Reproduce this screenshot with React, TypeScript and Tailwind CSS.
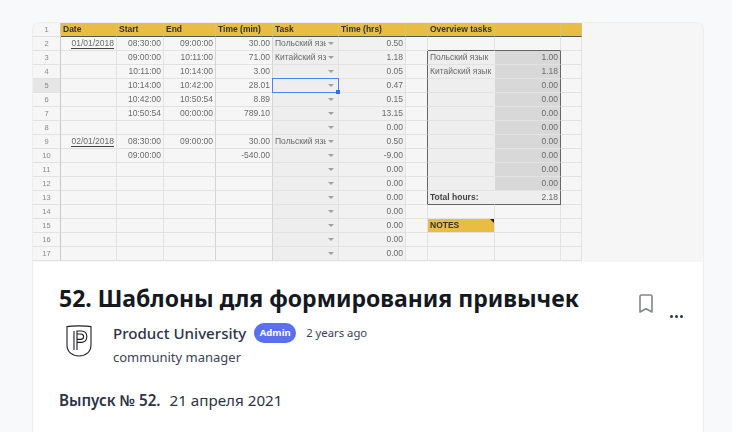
const rows: string[][] = [
  ['Date', 'Start', 'End', 'Time (min)', 'Task', 'Time (hrs)', '', 'Overview tasks', '', ''],
  ['01/01/2018', '08:30:00', '09:00:00', '30.00', 'Польский язык', '0.50', '', '', '', ''],
  ['', '09:00:00', '10:11:00', '71.00', 'Китайский язык', '1.18', '', 'Польский язык', '1.00', ''],
  ['', '10:11:00', '10:14:00', '3.00', '', '0.05', '', 'Китайский язык', '1.18', ''],
  ['', '10:14:00', '10:42:00', '28.01', '', '0.47', '', '', '0.00', ''],
  ['', '10:42:00', '10:50:54', '8.89', '', '0.15', '', '', '0.00', ''],
  ['', '10:50:54', '00:00:00', '789.10', '', '13.15', '', '', '0.00', ''],
  ['', '', '', '', '', '0.00', '', '', '0.00', ''],
  ['02/01/2018', '08:30:00', '09:00:00', '30.00', 'Польский язык', '0.50', '', '', '0.00', ''],
  ['', '09:00:00', '', '-540.00', '', '-9.00', '', '', '0.00', ''],
  ['', '', '', '', '', '0.00', '', '', '0.00', ''],
  ['', '', '', '', '', '0.00', '', '', '0.00', ''],
  ['', '', '', '', '', '0.00', '', 'Total hours:', '2.18', ''],
  ['', '', '', '', '', '0.00', '', '', '', ''],
  ['', '', '', '', '', '0.00', '', 'NOTES', '', ''],
  ['', '', '', '', '', '0.00', '', '', '', ''],
  ['', '', '', '', '', '0.00', '', '', '', ''],
]

function SheetCell({ value, row, col }: { value: string; row: number; col: number }) {
  const isHeader = row === 0
  const inBox = row >= 2 && row <= 12
  const isNotes = row === 14 && col === 7
  const isTotal = row === 12
  const isSelected = row === 4 && col === 4
  const boxCol = col === 7 || col === 8
  const rightAlign = (col <= 5 && col !== 4) || col === 8

  let bg = 'bg-[#f6f6f6]'
  if (col === 4 && !isHeader) bg = 'bg-[#eeeeee]'
  if (col === 5 && !isHeader) bg = 'bg-[#f1f1f1]'
  if (inBox && col === 7) bg = 'bg-[#eeeeee]'
  if (inBox && col === 8) bg = isTotal ? 'bg-[#eeeeee]' : 'bg-[#d8d8d8]'
  if (isHeader || isNotes) bg = 'bg-[#e9bd44]'

  let borderB = 'border-b-[#e2e2e2]'
  if (isHeader) borderB = 'border-b-[#555555]'
  else if (boxCol && (row === 1 || isTotal)) borderB = 'border-b-[#666666]'

  let borderR = 'border-r-[#e2e2e2]'
  if (isHeader) borderR = 'border-r-[#d9c178]'
  else if (inBox && col === 8) borderR = 'border-r-[#666666]'
  else if (col === 3 || col === 2) borderR = 'border-r-[#d4d4d4]'
  else if (inBox && col === 7) borderR = 'border-r-[#eeeeee]'
  else if (col === 6 && inBox) borderR = 'border-r-[#666666]'

  let text = 'text-[#6a6a6a]'
  if (isHeader || isNotes) text = 'font-bold text-[#333333]'
  else if (isTotal && col === 7) text = 'font-bold text-[#444444]'

  return (
    <div
      className={`relative flex items-center whitespace-nowrap px-[2px] border-b border-r ${bg} ${borderB} ${borderR} ${text} ${
        rightAlign && !isHeader ? 'justify-end' : ''
      } ${isSelected ? 'z-10 overflow-visible' : 'overflow-hidden'}`}
    >
      {col === 0 && value && !isHeader ? <span className="border-b border-[#444444] leading-[9px]">{value}</span> : value}
      {col === 4 && !isHeader && (
        <>
          {value && <span className="absolute right-0 top-0 h-full w-[12px] bg-[#eeeeee]" />}
          <span className="absolute right-[4px] top-[5px] h-0 w-0 border-x-[3px] border-t-[3px] border-x-transparent border-t-[#a0a0a0]" />
        </>
      )}
      {isNotes && <span className="absolute right-0 top-0 h-0 w-0 border-l-[4px] border-t-[4px] border-l-transparent border-t-[#222222]" />}
      {isSelected && (
        <>
          <span className="absolute -inset-px border-[1.5px] border-[#4a86e8]" />
          <span className="absolute bottom-[-2px] right-[-2px] h-[4px] w-[4px] bg-[#2f6fe8]" />
        </>
      )}
    </div>
  )
}

function Sheet() {
  return (
    <div className="flex h-[239px] bg-[#f6f6f6] blur-[0.5px] overflow-hidden">
      <div className="w-[549px] shrink-0 grid grid-cols-[28px_56px_47px_52px_57px_66px_67px_22px_67px_66px_21px] auto-rows-[14px] text-[8.5px] font-['Liberation_Sans',Arial,sans-serif]">
        {rows.map((r, row) => (
          <div key={row} className="contents">
            <div
              className={`flex items-center justify-center border-b border-r border-b-[#e2e2e2] border-r-[#c8c8c8] text-[7.5px] text-[#888888] ${
                row === 4 ? 'bg-[#e6e6e6]' : 'bg-[#f6f6f6]'
              }`}
            >
              {row + 1}
            </div>
            {r.map((v, col) => (
              <SheetCell key={col} value={v} row={row} col={col} />
            ))}
          </div>
        ))}
      </div>
      <div className="flex-1 bg-[#f6f6f6]" />
    </div>
  )
}

function Logo() {
  return (
    <svg width="26" height="32" viewBox="0 0 26 32" fill="none" stroke="#1f2026" strokeWidth="1.1">
      <path d="M1 1.6C5.5 0.6 20.5 0.6 25 1.6V20C25 27 19.5 31 13 31S1 27 1 20Z" />
      <path d="M8 25V6" />
      <path d="M11 25V6H15C19 6 20.8 8.6 20.8 11.6S19 17.4 15 17.4H11" />
      <path d="M11 9H14.6C16.6 9 17.6 10.2 17.6 11.7S16.6 14.4 14.6 14.4H11" />
    </svg>
  )
}

export default function App() {
  return (
    <div className="h-[432px] w-[732px] overflow-hidden bg-[#f8f9fb] pt-[22px] font-['Noto_Sans','Open_Sans',sans-serif]">
      <div className="ml-[32px] w-[672px] h-[420px] rounded-t-lg border-x border-t border-[#eceef2] bg-white overflow-hidden">
        <Sheet />
        <div className="relative px-[26px] pt-[19px]">
          <h1 className="text-[23px] font-bold leading-[34px] text-[#14181f]">52. Шаблоны для формирования привычек</h1>
          <div className="mt-[8px] flex items-start">
            <div className="ml-[7px] mt-[2px] shrink-0">
              <Logo />
            </div>
            <div className="ml-[21px]">
              <div className="flex items-center h-[20px]">
                <span className="text-[15.1px] font-medium text-[#2c3346]">Product University</span>
                <span className="ml-[8px] rounded-full bg-[#5b6ff2] px-[5.5px] py-[2px] text-[9.5px] font-bold leading-[16px] text-white">Admin</span>
                <span className="ml-[10px] text-[11.3px] text-[#3c4354]">2 years ago</span>
              </div>
              <div className="mt-[5px] text-[13px] leading-[18px] text-[#3c4354]">community manager</div>
            </div>
          </div>
          <p className="mt-[23px] text-[15.2px] leading-[22px] text-[#2c3346]">
            <span className="font-semibold">Выпуск № 52.</span> <span className="ml-[5px]">21 апреля 2021</span>
          </p>
          <div className="absolute right-[49px] top-[32px]">
            <svg width="16" height="20" viewBox="0 0 16 20" fill="none" stroke="#81858f" strokeWidth="1.6" strokeLinejoin="round">
              <path d="M2 2.5C2 1.6 2.6 1 3.5 1H12.5C13.4 1 14 1.6 14 2.5V18L8 14.8L2 18Z" />
            </svg>
          </div>
          <div className="absolute right-[20px] top-[53px] flex gap-[2px]">
            <span className="h-[3px] w-[3px] rounded-full bg-[#2b3345]" />
            <span className="h-[3px] w-[3px] rounded-full bg-[#2b3345]" />
            <span className="h-[3px] w-[3px] rounded-full bg-[#2b3345]" />
          </div>
        </div>
      </div>
    </div>
  )
}
